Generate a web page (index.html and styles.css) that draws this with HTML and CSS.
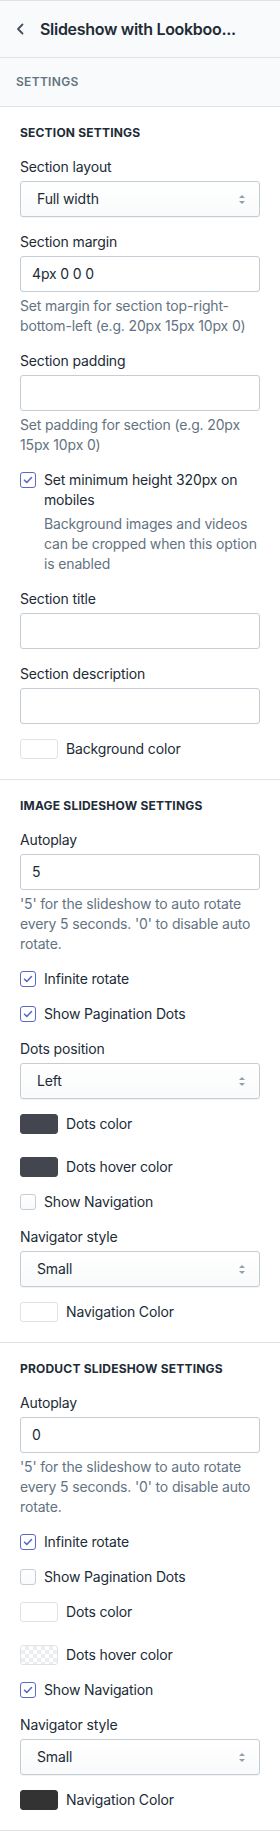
FILE: index.html
```html
<!DOCTYPE html>
<html>
<head>
  <meta charset="UTF-8" />
  <title>Slideshow with Lookbook</title>
  <link rel="stylesheet" href="styles.css">
</head>
<body>
  <header class="topbar">
    <svg class="back" width="8" height="12" viewBox="0 0 8 12"><path d="M6.5 1.5 2 6l4.5 4.5" fill="none" stroke="#454f5b" stroke-width="1.8" stroke-linecap="round" stroke-linejoin="round"/></svg>
    <span class="title">Slideshow with Lookboo...</span>
  </header>
  <div class="tabbar">SETTINGS</div>

  <!-- Section settings -->
  <section class="group">
    <h2>SECTION SETTINGS</h2>

    <div class="field">
      <label>Section layout</label>
      <div class="select">Full width <span class="arrows"></span></div>
    </div>

    <div class="field">
      <label>Section margin</label>
      <div class="input">4px 0 0 0</div>
      <p class="help">Set margin for section top-right-bottom-left (e.g. 20px 15px 10px 0)</p>
    </div>

    <div class="field">
      <label>Section padding</label>
      <div class="input"></div>
      <p class="help">Set padding for section (e.g. 20px 15px 10px 0)</p>
    </div>

    <div class="field check">
      <span class="box on"></span>
      <div>
        <span class="check-label">Set minimum height 320px on mobiles</span>
        <p class="help">Background images and videos can be cropped when this option is enabled</p>
      </div>
    </div>

    <div class="field">
      <label>Section title</label>
      <div class="input"></div>
    </div>

    <div class="field">
      <label>Section description</label>
      <div class="input"></div>
    </div>

    <div class="field color">
      <span class="swatch"></span>
      <span>Background color</span>
    </div>
  </section>

  <!-- Image slideshow settings -->
  <section class="group">
    <h2>IMAGE SLIDESHOW SETTINGS</h2>

    <div class="field">
      <label>Autoplay</label>
      <div class="input">5</div>
      <p class="help">'5' for the slideshow to auto rotate every 5 seconds. '0' to disable auto rotate.</p>
    </div>

    <div class="field check"><span class="box on"></span><span class="check-label">Infinite rotate</span></div>
    <div class="field check"><span class="box on"></span><span class="check-label">Show Pagination Dots</span></div>

    <div class="field">
      <label>Dots position</label>
      <div class="select">Left <span class="arrows"></span></div>
    </div>

    <div class="field color"><span class="swatch dark"></span><span>Dots color</span></div>
    <div class="field color"><span class="swatch dark"></span><span>Dots hover color</span></div>

    <div class="field check"><span class="box"></span><span class="check-label">Show Navigation</span></div>

    <div class="field">
      <label>Navigator style</label>
      <div class="select">Small <span class="arrows"></span></div>
    </div>

    <div class="field color"><span class="swatch"></span><span>Navigation Color</span></div>
  </section>

  <!-- Product slideshow settings -->
  <section class="group">
    <h2>PRODUCT SLIDESHOW SETTINGS</h2>

    <div class="field">
      <label>Autoplay</label>
      <div class="input">0</div>
      <p class="help">'5' for the slideshow to auto rotate every 5 seconds. '0' to disable auto rotate.</p>
    </div>

    <div class="field check"><span class="box on"></span><span class="check-label">Infinite rotate</span></div>
    <div class="field check"><span class="box"></span><span class="check-label">Show Pagination Dots</span></div>

    <div class="field color"><span class="swatch"></span><span>Dots color</span></div>
    <div class="field color"><span class="swatch empty"></span><span>Dots hover color</span></div>

    <div class="field check"><span class="box on"></span><span class="check-label">Show Navigation</span></div>

    <div class="field">
      <label>Navigator style</label>
      <div class="select">Small <span class="arrows"></span></div>
    </div>

    <div class="field color"><span class="swatch black"></span><span>Navigation Color</span></div>
  </section>
</body>
</html>
```

FILE: styles.css
```css
body {
  margin: 0;
  font-family: Inter, "Noto Sans", sans-serif;
  font-size: 14px;
  line-height: 20px;
  letter-spacing: -0.15px;
  color: #212b36;
  background: #fff;
}
.topbar {
  display: flex;
  align-items: center;
  height: 56px;
  padding-left: 16px;
  border-top: 1px solid #dfe3e8;
  border-bottom: 1px solid #dfe3e8;
  background: #f9fafb;
}
.back {
  margin-right: 16px;
}
.title {
  font-size: 16px;
  font-weight: 600;
  letter-spacing: -0.3px;
  white-space: nowrap;
}
.tabbar {
  height: 48px;
  line-height: 48px;
  padding-left: 16px;
  font-size: 12px;
  font-weight: 600;
  letter-spacing: 0.3px;
  color: #637381;
  background: #f9fafb;
  border-bottom: 1px solid #dfe3e8;
}
.group {
  padding: 18px 20px 20px;
  border-bottom: 1px solid #dfe3e8;
}
.group h2 {
  margin: 0 0 16px;
  font-size: 12px;
  line-height: 16px;
  font-weight: 700;
  letter-spacing: 0.2px;
}
.field {
  margin-bottom: 15px;
}
.field:last-child {
  margin-bottom: 0;
}
.field label {
  display: block;
  margin-bottom: 4px;
}
.input, .select {
  box-sizing: border-box;
  height: 36px;
  line-height: 34px;
  border: 1px solid #c4cdd5;
  border-radius: 3px;
  padding: 0 11px;
  background: #fff;
}
.select {
  position: relative;
  padding-left: 16px;
  background: linear-gradient(#fff, #f9fafb);
  box-shadow: 0 1px 0 rgba(22, 29, 37, 0.05);
}
.arrows {
  position: absolute;
  right: 14px;
  top: 13px;
  width: 6px;
  height: 9px;
}
.arrows::before, .arrows::after {
  content: "";
  position: absolute;
  left: 0;
  border-left: 3px solid transparent;
  border-right: 3px solid transparent;
}
.arrows::before {
  top: 0;
  border-bottom: 3px solid #919eab;
}
.arrows::after {
  bottom: 0;
  border-top: 3px solid #919eab;
}
.help {
  margin: 4px 0 0;
  color: #637381;
}
.check {
  display: flex;
  align-items: flex-start;
}
.box {
  flex: none;
  box-sizing: border-box;
  width: 16px;
  height: 16px;
  margin: 2px 8px 0 0;
  border: 1px solid #c4cdd5;
  border-radius: 3px;
  background: linear-gradient(#fff, #f9fafb);
}
.box.on {
  border-color: #5c6ac4;
  background: #fff url("data:image/svg+xml,%3Csvg xmlns='http://www.w3.org/2000/svg' viewBox='0 0 14 14'%3E%3Cpath d='M3.5 7.2 5.8 9.5 10.5 4.5' fill='none' stroke='%235c6ac4' stroke-width='1.6' stroke-linecap='round' stroke-linejoin='round'/%3E%3C/svg%3E") center / 14px 14px no-repeat;
}
.color {
  display: flex;
  align-items: center;
}
.color + .color {
  margin-top: 23px;
}
.swatch {
  box-sizing: border-box;
  width: 38px;
  height: 20px;
  margin-right: 8px;
  border: 1px solid #dfe3e8;
  border-radius: 3px;
  background: #fff;
}
.swatch.dark {
  background: #43464e;
  border-color: #43464e;
}
.swatch.black {
  background: #333;
  border-color: #333;
}
.swatch.empty {
  background-color: #fff;
  background-image:
    linear-gradient(45deg, #eceef1 25%, transparent 25%, transparent 75%, #eceef1 75%),
    linear-gradient(45deg, #eceef1 25%, transparent 25%, transparent 75%, #eceef1 75%);
  background-size: 8px 8px;
  background-position: 0 0, 4px 4px;
}
```
